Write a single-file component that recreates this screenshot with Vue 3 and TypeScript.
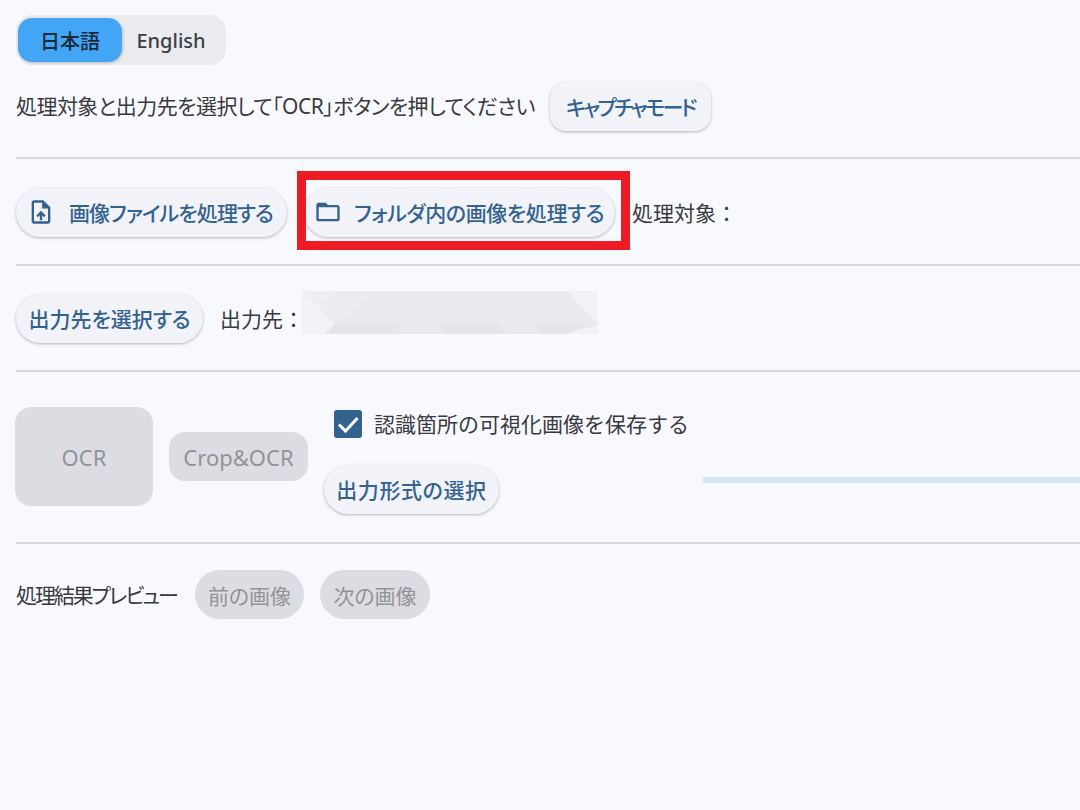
<script setup lang="ts">
const formats = { ocr: 'OCR', crop: 'Crop&OCR' }
</script>

<template>
  <div class="page">
    <div class="lang">
      <span class="lang-on">日本語</span>
      <span class="lang-off">English</span>
    </div>

    <div class="row intro">
      <span class="label">処理対象と出力先を選択して「OCR」ボタンを押してください</span>
      <button class="btn capture">キャプチャモード</button>
    </div>
    <hr class="rule rule-1" />

    <div class="row source">
      <button class="btn with-icon file-btn">
        <svg class="icon" viewBox="0 0 24 24" width="28" height="28">
          <path fill="currentColor" d="M14 2H6c-1.100 0-2 .9-2 2v16c0 1.100.9 2 2 2h12c1.100 0 2-.9 2-2V8l-6-6zm4 18H6V4h7v5h5v11zM8 15.010l1.410 1.410L11 14.840V19h2v-4.160l1.590 1.590L16 15.010 12.010 11 8 15.010z" />
        </svg>
        <span>画像ファイルを処理する</span>
      </button>
      <button class="btn with-icon folder-btn">
        <svg class="icon" viewBox="0 0 24 24" width="28" height="28">
          <path fill="currentColor" d="M20 6h-8l-2-2H4c-1.100 0-1.990.9-1.990 2L2 18c0 1.100.9 2 2 2h16c1.100 0 2-.9 2-2V8c0-1.100-.9-2-2-2zm0 12H4V8h16v10z" />
        </svg>
        <span>フォルダ内の画像を処理する</span>
      </button>
      <span class="label target">処理対象：</span>
      <div class="highlight"></div>
    </div>
    <hr class="rule rule-2" />

    <div class="row dest">
      <button class="btn dest-btn">出力先を選択する</button>
      <span class="label dest-label">出力先：</span>
      <svg class="redacted" viewBox="0 0 296 43" width="296" height="43" preserveAspectRatio="none">
        <rect width="296" height="43" fill="#f1f2f6" />
        <polygon points="0,0 33,0 17,17" fill="#eeeff3" />
        <polygon points="33,0 265,0 296,34 263,43 23,43 33,33 17,17" fill="#e9eaee" />
        <polygon points="33,0 70,0 40,28 33,33 17,17" fill="#ebecf0" />
        <polygon points="33,33 263,33 287,33 263,43 23,43" fill="#e4e5e9" />
        <polygon points="100,33 135,33 145,43 88,43" fill="#e9eaee" />
        <polygon points="195,33 230,33 240,43 205,43" fill="#e9eaee" />
      </svg>
    </div>
    <hr class="rule rule-3" />

    <div class="row run">
      <button class="disabled ocr">{{ formats.ocr }}</button>
      <button class="disabled crop">{{ formats.crop }}</button>
      <div class="options">
        <label class="check">
          <span class="box">
            <svg viewBox="0 0 28 28" width="28" height="28">
              <path fill="none" stroke="#fff" stroke-width="3" d="M5 14.500l6.500 6.500L23.500 8" />
            </svg>
          </span>
          <span class="label">認識箇所の可視化画像を保存する</span>
        </label>
        <button class="btn format">出力形式の選択</button>
      </div>
      <div class="progress"></div>
    </div>
    <hr class="rule rule-4" />

    <div class="row preview">
      <span class="label preview-label">処理結果プレビュー</span>
      <button class="disabled pill">前の画像</button>
      <button class="disabled pill">次の画像</button>
    </div>
  </div>
</template>

<style>
html, body { margin: 0; background: #f8f9ff; }
</style>

<style scoped>
.page {
  width: 1080px;
  height: 810px;
  box-sizing: border-box;
  padding: 15px 0 0 16px;
  background: #f8f9ff;
  overflow: hidden;
  color: #383a3e;
  font-family: "Noto Sans", "Noto Sans CJK JP", sans-serif;
  font-size: 21px;
  display: flex;
  flex-direction: column;
  align-items: flex-start;
}
.lang {
  width: 210px;
  height: 50px;
  box-sizing: border-box;
  padding: 3px 0 0 2px;
  display: flex;
  border-radius: 16px;
  background: #e9ebef;
  font-size: 20px;
  font-weight: 500;
}
.lang-on {
  width: 104px;
  height: 44px;
  border-radius: 14px;
  background: #42a5f5;
  color: #1a2a38;
  display: flex;
  align-items: center;
  justify-content: center;
  box-shadow: 1px 1px 3px rgba(0, 0, 0, 0.2);
}
.lang-off {
  flex: 1;
  height: 44px;
  display: flex;
  align-items: center;
  justify-content: center;
  color: #3c4045;
  padding-right: 6px;
}
.row {
  display: flex;
  align-items: center;
  width: 100%;
}
.label { white-space: nowrap; line-height: 28px; }
.intro .label { font-feature-settings: "palt"; letter-spacing: -0.55px; margin-top: -2px; }
.preview-label { font-feature-settings: "palt"; letter-spacing: -2.1px; }
.btn {
  height: 49px;
  padding: 0 0 2px;
  border: none;
  border-radius: 25px;
  background: #f1f3f9;
  color: #34628f;
  font: inherit;
  font-weight: 500;
  font-feature-settings: "palt";
  white-space: nowrap;
  box-shadow: 0 1px 3px rgba(0, 0, 0, 0.28);
  display: flex;
  align-items: center;
  justify-content: center;
}
.intro { margin-top: 17px; }
.capture { margin-left: 15px; width: 161px; border-radius: 16px; flex: none; letter-spacing: -2.6px; }
.rule {
  width: 1064px;
  height: 2px;
  margin: 0;
  border: none;
  background: #d6d8de;
  flex: none;
}
.rule-1 { margin-top: 26px; }
.source { margin-top: 29px; position: relative; }
.with-icon { justify-content: flex-start; flex: none; }
.file-btn { width: 271px; padding-left: 11px; gap: 14px; letter-spacing: -0.9px; }
.folder-btn { width: 311px; margin-left: 17px; padding-left: 10px; gap: 12px; letter-spacing: -0.4px; }
.icon { flex: none; }
.target { margin-left: 17px; }
.highlight {
  position: absolute;
  left: 281px;
  top: -17px;
  width: 333px;
  height: 79px;
  box-sizing: border-box;
  border: 9px solid #ed1c24;
}
.rule-2 { margin-top: 27px; }
.dest { margin-top: 28px; }
.dest-btn { width: 187px; flex: none; }
.dest-label { margin-left: 17px; }
.redacted { margin-left: -2px; margin-top: -3px; align-self: flex-start; flex: none; }
.rule-3 { margin-top: 27px; }
.run {
  margin-top: 35px;
  align-items: flex-start;
  position: relative;
  height: 135px;
}
.disabled {
  border: none;
  background: #dcdde2;
  color: #929397;
  font: inherit;
  white-space: nowrap;
  padding: 0;
}
.ocr, .crop { font-size: 22px; flex: none; }
.ocr { margin-left: -1px; width: 138px; height: 99px; border-radius: 16px; }
.crop { margin: 25px 0 0 16px; width: 139px; height: 49px; border-radius: 16px; }
.options { margin-left: 16px; display: flex; flex-direction: column; align-items: flex-start; }
.check { margin: 3px 0 0 10px; display: flex; align-items: center; gap: 12px; }
.box {
  width: 28px;
  height: 28px;
  border-radius: 3px;
  background: #34628f;
  display: flex;
  align-items: center;
  justify-content: center;
}
.format { margin-top: 27px; width: 175px; letter-spacing: 0.6px; }
.progress {
  position: absolute;
  left: 687px;
  top: 70px;
  width: 377px;
  height: 6px;
  background: #d6e3f8;
}
.preview { margin-top: 26px; }
.preview-label { width: 164px; flex: none; }
.pill { width: 109px; height: 49px; border-radius: 25px; font-feature-settings: "palt"; flex: none; }
.preview-label + .pill { margin-left: 15px; }
.pill + .pill { margin-left: 16px; width: 110px; }
</style>
